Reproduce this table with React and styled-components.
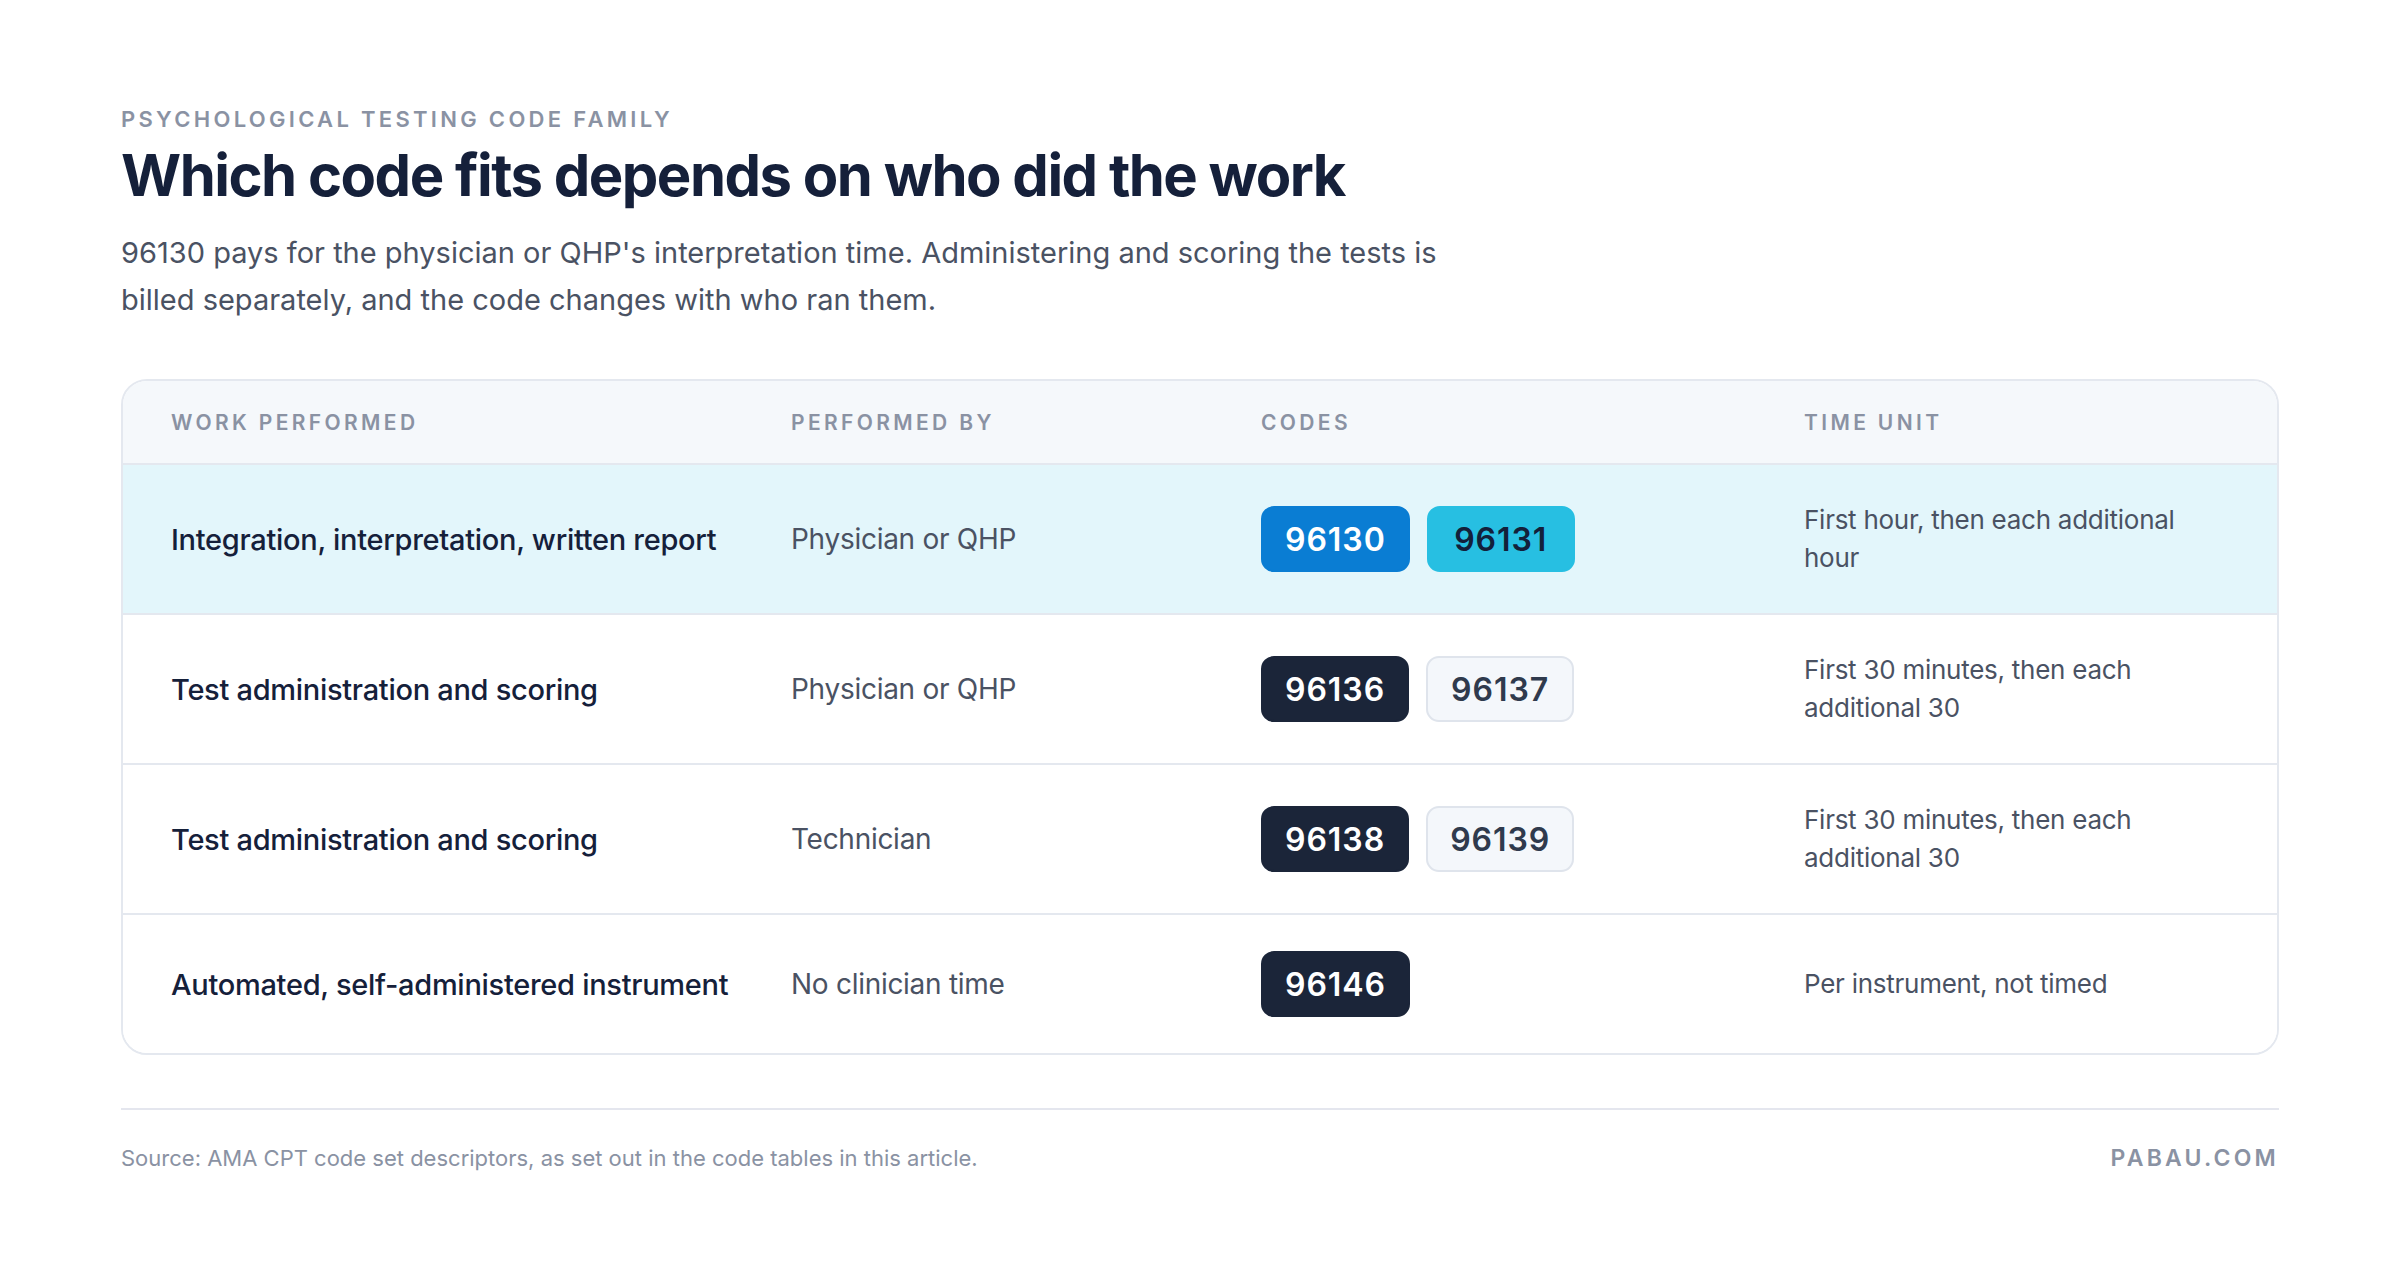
import React from "react";
import styled, { createGlobalStyle } from "styled-components";

const rows = [
  {
    work: "Integration, interpretation, written report",
    by: "Physician or QHP",
    codes: [
      { code: "96130", tone: "blue" },
      { code: "96131", tone: "cyan" },
    ],
    time: "First hour, then each additional hour",
    highlight: true,
  },
  {
    work: "Test administration and scoring",
    by: "Physician or QHP",
    codes: [
      { code: "96136", tone: "navy" },
      { code: "96137", tone: "light" },
    ],
    time: "First 30 minutes, then each additional 30",
  },
  {
    work: "Test administration and scoring",
    by: "Technician",
    codes: [
      { code: "96138", tone: "navy" },
      { code: "96139", tone: "light" },
    ],
    time: "First 30 minutes, then each additional 30",
  },
  {
    work: "Automated, self-administered instrument",
    by: "No clinician time",
    codes: [{ code: "96146", tone: "navy" }],
    time: "Per instrument, not timed",
  },
];

const tones = {
  blue: { bg: "#0a7dd3", fg: "#ffffff", border: "#0a7dd3" },
  cyan: { bg: "#27bfe2", fg: "#13203a", border: "#27bfe2" },
  navy: { bg: "#1b2539", fg: "#ffffff", border: "#1b2539" },
  light: { bg: "#f4f7fb", fg: "#2f3a4d", border: "#dfe4ec" },
};

export default function App() {
  return (
    <>
      <GlobalStyle />
      <Page>
        <Eyebrow>Psychological testing code family</Eyebrow>
        <Title>Which code fits depends on who did the work</Title>
        <Lead>
          96130 pays for the physician or QHP's interpretation time. Administering and
          scoring the tests is billed separately, and the code changes with who ran them.
        </Lead>

        <Table>
          <HeadRow>
            <HeadCell>Work performed</HeadCell>
            <HeadCell>Performed by</HeadCell>
            <HeadCell>Codes</HeadCell>
            <HeadCell>Time unit</HeadCell>
          </HeadRow>
          {rows.map((row, i) => (
            <Row key={i} $highlight={row.highlight}>
              <WorkCell>{row.work}</WorkCell>
              <ByCell>{row.by}</ByCell>
              <CodeList>
                {row.codes.map((c) => (
                  <Badge key={c.code} $tone={c.tone}>
                    {c.code}
                  </Badge>
                ))}
              </CodeList>
              <TimeCell>{row.time}</TimeCell>
            </Row>
          ))}
        </Table>

        <Footer>
          <Source>Source: AMA CPT code set descriptors, as set out in the code tables in this article.</Source>
          <Brand>pabau.com</Brand>
        </Footer>
      </Page>
    </>
  );
}

const GlobalStyle = createGlobalStyle`
  html, body {
    margin: 0;
    background: #ffffff;
    font-family: Inter, "Noto Sans", sans-serif;
    color: #1a2238;
  }
`;

const Page = styled.div`
  width: 2158px;
  padding: 105px 121px 0;
`;

const Eyebrow = styled.div`
  font-size: 22px;
  font-weight: 600;
  letter-spacing: 0.15em;
  text-transform: uppercase;
  color: #8a92a3;
  line-height: 28px;
`;

const Title = styled.h1`
  margin: 6px 0 0;
  font-size: 58px;
  font-weight: 700;
  letter-spacing: -0.026em;
  line-height: 72px;
  color: #15203a;
`;

const Lead = styled.p`
  margin: 18px 0 0;
  max-width: 1330px;
  font-size: 29px;
  line-height: 47px;
  font-weight: 400;
  color: #4a5263;
`;

const Table = styled.div`
  margin-top: 56px;
  border: 2px solid #e4e8ef;
  border-radius: 26px;
  overflow: hidden;
`;

const grid = `
  display: grid;
  grid-template-columns: 620px 470px 543px 1fr;
  padding: 0 48px;
  align-items: center;
`;

const HeadRow = styled.div`
  ${grid}
  height: 82px;
  background: #f5f8fb;
`;

const HeadCell = styled.div`
  font-size: 21px;
  font-weight: 600;
  letter-spacing: 0.16em;
  text-transform: uppercase;
  color: #8a92a3;
`;

const Row = styled.div`
  ${grid}
  padding-top: 36px;
  padding-bottom: 36px;
  border-top: 2px solid #e4e8ef;
  background: ${(p) => (p.$highlight ? "#e3f6fb" : "#ffffff")};
`;

const WorkCell = styled.div`
  font-size: 29px;
  font-weight: 500;
  color: #15203a;
  letter-spacing: -0.01em;
`;

const ByCell = styled.div`
  font-size: 28px;
  font-weight: 400;
  color: #4a5263;
  letter-spacing: -0.01em;
`;

const CodeList = styled.div`
  display: flex;
  gap: 17px;
`;

const Badge = styled.span`
  display: inline-flex;
  align-items: center;
  justify-content: center;
  height: 66px;
  padding: 0 22px;
  min-width: 148px;
  box-sizing: border-box;
  border-radius: 13px;
  font-size: 32px;
  font-weight: 600;
  letter-spacing: 0.03em;
  background: ${(p) => tones[p.$tone].bg};
  color: ${(p) => tones[p.$tone].fg};
  border: 2px solid ${(p) => tones[p.$tone].border};
`;

const TimeCell = styled.div`
  font-size: 26px;
  line-height: 38px;
  font-weight: 400;
  color: #4a5263;
  letter-spacing: -0.01em;
`;

const Footer = styled.div`
  margin-top: 53px;
  border-top: 2px solid #e4e6ee;
  padding-top: 34px;
  display: flex;
  justify-content: space-between;
  align-items: center;
`;

const Source = styled.div`
  font-size: 22px;
  color: #8a92a3;
`;

const Brand = styled.div`
  font-size: 23px;
  font-weight: 600;
  letter-spacing: 0.14em;
  text-transform: uppercase;
  color: #8a92a3;
`;
